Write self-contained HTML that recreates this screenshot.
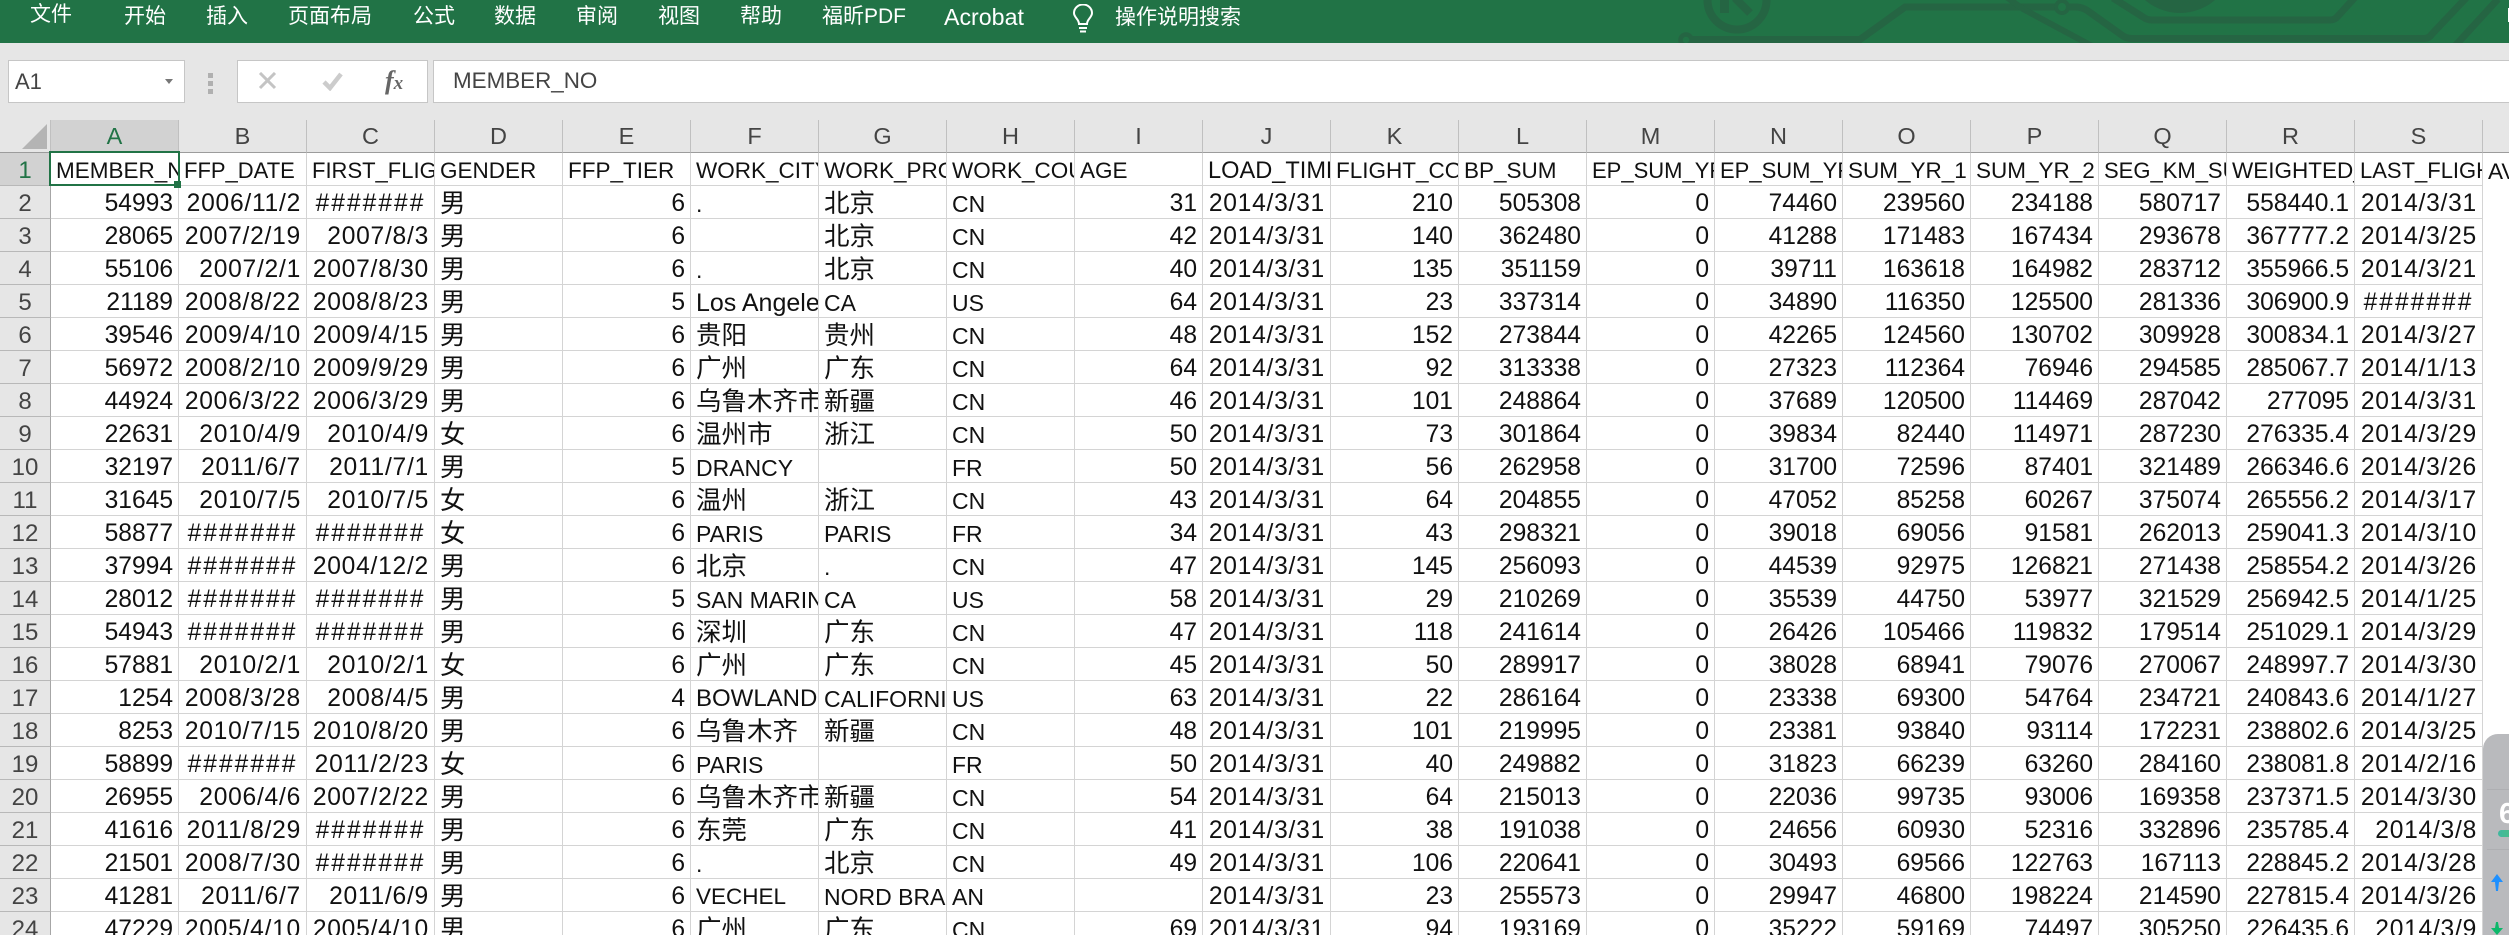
<!DOCTYPE html>
<html lang="zh">
<head>
<meta charset="utf-8">
<title>Excel</title>
<style>
html,body{margin:0;padding:0;width:2509px;height:935px;overflow:hidden;background:#fff}
body{position:relative;font-family:"Liberation Sans","Noto Sans CJK SC",sans-serif;color:#111}
.top{position:absolute;left:0;top:0;width:2509px;height:43px;background:#217346;overflow:hidden}
.top svg{position:absolute;left:0;top:0}
.m{position:absolute;white-space:nowrap;color:#fff;font-size:21px;line-height:30px;font-weight:400;top:2px}
.bar{position:absolute;left:0;top:43px;width:2509px;height:77px;background:#e6e6e6}
.box{position:absolute;background:#fff;border:1px solid #c6c6c6;box-sizing:border-box}
.dot{position:absolute;left:208px;width:5px;height:5px;background:#b0b0b0}
table{position:absolute;left:0;top:120px;border-collapse:separate;border-spacing:0;table-layout:fixed;width:2611px}
col.rh{width:51px}
col.c{width:128px}
tr{height:33px}
td,th{box-sizing:border-box;height:33px;padding:4px 0 0;line-height:28px;overflow:hidden;white-space:nowrap;font-weight:400;border-right:1px solid #d4d4d4;border-bottom:1px solid #d4d4d4;font-size:24.6px;color:#111}
th{background:#e6e6e6;color:#444;text-align:center;font-size:24px;border-right:1px solid #a6a6a6;border-bottom:1px solid #b8b8b8;padding-top:4px}
thead th{font-size:23.5px;border-right:1px solid #c0c0c0;border-bottom:1px solid #9c9c9c;padding-top:1px;line-height:31px}
thead th:first-child{background:#e6e6e6}
thead th.s,th.s{background:#d2d2d2;color:#217346}
td{text-align:left;padding-left:5px}
td:nth-child(2),td:nth-child(6),td:nth-child(10),td:nth-child(n+12):nth-child(-n+19){text-align:right;padding-left:0;padding-right:5px}
td:nth-child(3),td:nth-child(4),td:nth-child(11),td:nth-child(20){text-align:right;padding-left:0;padding-right:5px;letter-spacing:.75px}
td:nth-child(5),td:nth-child(7),td:nth-child(8){font-size:25.5px;font-weight:400}
td:nth-child(9){font-size:23px}
td:last-child{border:0}
td.l{font-size:23px!important;font-weight:400}
td.h{text-align:center!important;padding:4px 0 0!important;letter-spacing:2px!important}
tr.f td{text-align:left!important;padding:4px 0 0 5px!important;font-size:22.5px!important;font-weight:400;letter-spacing:0!important}
tr.f td.n{font-size:22px!important}
tr.f td.w2{font-size:23.6px!important}
.sel{position:absolute;left:49px;top:151px;width:131px;height:35px;border:2px solid #217346;box-sizing:border-box}
.hd{position:absolute;left:174px;top:181px;width:7px;height:7px;background:#217346;border:0 solid #fff}
.tri{position:absolute;left:22px;top:124px;width:0;height:0;border-style:solid;border-width:0 0 25px 25px;border-color:transparent transparent #b4b4b4 transparent}
.w{position:absolute;left:2483px;top:734px;width:40px;height:201px;background:#b9babd;border-radius:15px 0 0 0;overflow:hidden}
.w i{position:absolute;display:block}
</style>
</head>
<body>
<div class="top">
<svg width="2509" height="43" viewBox="0 0 2509 43" fill="none" stroke="#256543" stroke-width="7">
<circle cx="1737" cy="0" r="29.5" stroke-width="8"/>
<path d="M1724.500 0V13" stroke-width="9"/>
<path d="M1735 -2L1750 13" stroke-width="8"/>
<circle cx="1686" cy="40" r="5.500" stroke-width="4.500"/>
<path d="M1691 39.500H1860L1905 7H2055"/>
<circle cx="2062" cy="7" r="6" stroke-width="4"/>
<path d="M2068 7H2076Q2082 7 2088 11L2123 36Q2127 38.500 2132 38.500H2424Q2429 38.500 2432 34L2467 -3"/>
<path d="M2113 -2L2143 17Q2147 20 2152 20H2330Q2335 20 2338 16L2358 -6"/>
<path d="M2005 -4L2023 9L2092 46" stroke-width="6"/>
<path d="M2498 -1L2455 46"/>
<circle cx="2180" cy="-40.600" r="53.600" fill="#256543" stroke="none"/>
</svg>
<span class="m" style="left:30px;top:0">文件</span>
<span class="m" style="left:124px">开始</span>
<span class="m" style="left:206px">插入</span>
<span class="m" style="left:288px">页面布局</span>
<span class="m" style="left:413px">公式</span>
<span class="m" style="left:494px">数据</span>
<span class="m" style="left:576px">审阅</span>
<span class="m" style="left:658px">视图</span>
<span class="m" style="left:740px">帮助</span>
<span class="m" style="left:822px">福昕PDF</span>
<span class="m" style="left:944px;font-size:23.200px">Acrobat</span>
<svg style="left:1072px;top:4px" width="22" height="29" viewBox="0 0 22 29" fill="none" stroke="#fff" stroke-width="2">
<path d="M7 20C7 15 2 13.500 2 9A9 8.500 0 0 1 20 9C20 13.500 15 15 15 20Z"/>
<path d="M7 24H15M8 27.500H14"/>
</svg>
<span class="m" style="left:1115px;top:3px">操作说明搜索</span>
<i style="position:absolute;left:2508px;top:8px;width:1px;height:14px;background:#fff"></i>
</div>

<div class="bar"></div>
<div class="box" style="left:8px;top:60px;width:177px;height:43px"></div>
<div style="position:absolute;left:15px;top:68px;font-size:22px;line-height:28px;color:#444">A1</div>
<svg style="position:absolute;left:165px;top:79px" width="8" height="5"><path d="M0 0H8L4 5Z" fill="#777"/></svg>
<i class="dot" style="top:73px"></i><i class="dot" style="top:81px"></i><i class="dot" style="top:89px"></i>
<div class="box" style="left:237px;top:60px;width:191px;height:43px"></div>
<div class="box" style="left:433px;top:60px;width:2090px;height:43px"></div>
<svg style="position:absolute;left:258px;top:72px" width="20" height="18" fill="none" stroke="#c4c4c4" stroke-width="3"><path d="M2 1L17 16M17 1L2 16"/></svg>
<svg style="position:absolute;left:322px;top:72px" width="22" height="19" fill="none" stroke="#cccccc" stroke-width="4.500"><path d="M2 10L8 16L19 2"/></svg>
<div style="position:absolute;left:385px;top:66px;font-family:'Liberation Serif',serif;font-style:italic;font-weight:700;font-size:26px;line-height:30px;color:#666">f<span style="font-size:19px">x</span></div>
<div style="position:absolute;left:453px;top:67px;font-size:22.400px;line-height:28px;color:#444">MEMBER_NO</div>

<table>
<colgroup><col class="rh"><col class="c"><col class="c"><col class="c"><col class="c"><col class="c"><col class="c"><col class="c"><col class="c"><col class="c"><col class="c"><col class="c"><col class="c"><col class="c"><col class="c"><col class="c"><col class="c"><col class="c"><col class="c"><col class="c"><col class="c"></colgroup>
<thead><tr><th></th><th class="s">A</th><th>B</th><th>C</th><th>D</th><th>E</th><th>F</th><th>G</th><th>H</th><th>I</th><th>J</th><th>K</th><th>L</th><th>M</th><th>N</th><th>O</th><th>P</th><th>Q</th><th>R</th><th>S</th><th>T</th></tr></thead>
<tbody>
<tr class="f"><th class="s">1</th><td>MEMBER_NO</td><td class="n">FFP_DATE</td><td class="n">FIRST_FLIGHT_DATE</td><td>GENDER</td><td>FFP_TIER</td><td>WORK_CITY</td><td>WORK_PROVINCE</td><td>WORK_COUNTRY</td><td>AGE</td><td class="w2">LOAD_TIME</td><td>FLIGHT_COUNT</td><td>BP_SUM</td><td class="n">EP_SUM_YR_1</td><td class="n">EP_SUM_YR_2</td><td>SUM_YR_1</td><td>SUM_YR_2</td><td class="n">SEG_KM_SUM</td><td>WEIGHTED_SEG</td><td class="n">LAST_FLIGHT_DATE</td><td>AVG_INTERVAL</td></tr>
<tr><th>2</th><td>54993</td><td>2006/11/2</td><td class="h">#######</td><td>男</td><td>6</td><td class="l">.</td><td>北京</td><td>CN</td><td>31</td><td>2014/3/31</td><td>210</td><td>505308</td><td>0</td><td>74460</td><td>239560</td><td>234188</td><td>580717</td><td>558440.1</td><td>2014/3/31</td><td></td></tr>
<tr><th>3</th><td>28065</td><td>2007/2/19</td><td>2007/8/3</td><td>男</td><td>6</td><td class="l"></td><td>北京</td><td>CN</td><td>42</td><td>2014/3/31</td><td>140</td><td>362480</td><td>0</td><td>41288</td><td>171483</td><td>167434</td><td>293678</td><td>367777.2</td><td>2014/3/25</td><td></td></tr>
<tr><th>4</th><td>55106</td><td>2007/2/1</td><td>2007/8/30</td><td>男</td><td>6</td><td class="l">.</td><td>北京</td><td>CN</td><td>40</td><td>2014/3/31</td><td>135</td><td>351159</td><td>0</td><td>39711</td><td>163618</td><td>164982</td><td>283712</td><td>355966.5</td><td>2014/3/21</td><td></td></tr>
<tr><th>5</th><td>21189</td><td>2008/8/22</td><td>2008/8/23</td><td>男</td><td>5</td><td class="l" style="font-size:25px!important">Los Angeles</td><td class="l">CA</td><td>US</td><td>64</td><td>2014/3/31</td><td>23</td><td>337314</td><td>0</td><td>34890</td><td>116350</td><td>125500</td><td>281336</td><td>306900.9</td><td class="h">#######</td><td></td></tr>
<tr><th>6</th><td>39546</td><td>2009/4/10</td><td>2009/4/15</td><td>男</td><td>6</td><td>贵阳</td><td>贵州</td><td>CN</td><td>48</td><td>2014/3/31</td><td>152</td><td>273844</td><td>0</td><td>42265</td><td>124560</td><td>130702</td><td>309928</td><td>300834.1</td><td>2014/3/27</td><td></td></tr>
<tr><th>7</th><td>56972</td><td>2008/2/10</td><td>2009/9/29</td><td>男</td><td>6</td><td>广州</td><td>广东</td><td>CN</td><td>64</td><td>2014/3/31</td><td>92</td><td>313338</td><td>0</td><td>27323</td><td>112364</td><td>76946</td><td>294585</td><td>285067.7</td><td>2014/1/13</td><td></td></tr>
<tr><th>8</th><td>44924</td><td>2006/3/22</td><td>2006/3/29</td><td>男</td><td>6</td><td>乌鲁木齐市</td><td>新疆</td><td>CN</td><td>46</td><td>2014/3/31</td><td>101</td><td>248864</td><td>0</td><td>37689</td><td>120500</td><td>114469</td><td>287042</td><td>277095</td><td>2014/3/31</td><td></td></tr>
<tr><th>9</th><td>22631</td><td>2010/4/9</td><td>2010/4/9</td><td>女</td><td>6</td><td>温州市</td><td>浙江</td><td>CN</td><td>50</td><td>2014/3/31</td><td>73</td><td>301864</td><td>0</td><td>39834</td><td>82440</td><td>114971</td><td>287230</td><td>276335.4</td><td>2014/3/29</td><td></td></tr>
<tr><th>10</th><td>32197</td><td>2011/6/7</td><td>2011/7/1</td><td>男</td><td>5</td><td class="l">DRANCY</td><td></td><td>FR</td><td>50</td><td>2014/3/31</td><td>56</td><td>262958</td><td>0</td><td>31700</td><td>72596</td><td>87401</td><td>321489</td><td>266346.6</td><td>2014/3/26</td><td></td></tr>
<tr><th>11</th><td>31645</td><td>2010/7/5</td><td>2010/7/5</td><td>女</td><td>6</td><td>温州</td><td>浙江</td><td>CN</td><td>43</td><td>2014/3/31</td><td>64</td><td>204855</td><td>0</td><td>47052</td><td>85258</td><td>60267</td><td>375074</td><td>265556.2</td><td>2014/3/17</td><td></td></tr>
<tr><th>12</th><td>58877</td><td class="h">#######</td><td class="h">#######</td><td>女</td><td>6</td><td class="l">PARIS</td><td class="l">PARIS</td><td>FR</td><td>34</td><td>2014/3/31</td><td>43</td><td>298321</td><td>0</td><td>39018</td><td>69056</td><td>91581</td><td>262013</td><td>259041.3</td><td>2014/3/10</td><td></td></tr>
<tr><th>13</th><td>37994</td><td class="h">#######</td><td>2004/12/2</td><td>男</td><td>6</td><td>北京</td><td class="l">.</td><td>CN</td><td>47</td><td>2014/3/31</td><td>145</td><td>256093</td><td>0</td><td>44539</td><td>92975</td><td>126821</td><td>271438</td><td>258554.2</td><td>2014/3/26</td><td></td></tr>
<tr><th>14</th><td>28012</td><td class="h">#######</td><td class="h">#######</td><td>男</td><td>5</td><td class="l">SAN MARINO</td><td class="l">CA</td><td>US</td><td>58</td><td>2014/3/31</td><td>29</td><td>210269</td><td>0</td><td>35539</td><td>44750</td><td>53977</td><td>321529</td><td>256942.5</td><td>2014/1/25</td><td></td></tr>
<tr><th>15</th><td>54943</td><td class="h">#######</td><td class="h">#######</td><td>男</td><td>6</td><td>深圳</td><td>广东</td><td>CN</td><td>47</td><td>2014/3/31</td><td>118</td><td>241614</td><td>0</td><td>26426</td><td>105466</td><td>119832</td><td>179514</td><td>251029.1</td><td>2014/3/29</td><td></td></tr>
<tr><th>16</th><td>57881</td><td>2010/2/1</td><td>2010/2/1</td><td>女</td><td>6</td><td>广州</td><td>广东</td><td>CN</td><td>45</td><td>2014/3/31</td><td>50</td><td>289917</td><td>0</td><td>38028</td><td>68941</td><td>79076</td><td>270067</td><td>248997.7</td><td>2014/3/30</td><td></td></tr>
<tr><th>17</th><td>1254</td><td>2008/3/28</td><td>2008/4/5</td><td>男</td><td>4</td><td class="l" style="font-size:24px!important">BOWLAND</td><td class="l">CALIFORNIA</td><td>US</td><td>63</td><td>2014/3/31</td><td>22</td><td>286164</td><td>0</td><td>23338</td><td>69300</td><td>54764</td><td>234721</td><td>240843.6</td><td>2014/1/27</td><td></td></tr>
<tr><th>18</th><td>8253</td><td>2010/7/15</td><td>2010/8/20</td><td>男</td><td>6</td><td>乌鲁木齐</td><td>新疆</td><td>CN</td><td>48</td><td>2014/3/31</td><td>101</td><td>219995</td><td>0</td><td>23381</td><td>93840</td><td>93114</td><td>172231</td><td>238802.6</td><td>2014/3/25</td><td></td></tr>
<tr><th>19</th><td>58899</td><td class="h">#######</td><td>2011/2/23</td><td>女</td><td>6</td><td class="l">PARIS</td><td></td><td>FR</td><td>50</td><td>2014/3/31</td><td>40</td><td>249882</td><td>0</td><td>31823</td><td>66239</td><td>63260</td><td>284160</td><td>238081.8</td><td>2014/2/16</td><td></td></tr>
<tr><th>20</th><td>26955</td><td>2006/4/6</td><td>2007/2/22</td><td>男</td><td>6</td><td>乌鲁木齐市</td><td>新疆</td><td>CN</td><td>54</td><td>2014/3/31</td><td>64</td><td>215013</td><td>0</td><td>22036</td><td>99735</td><td>93006</td><td>169358</td><td>237371.5</td><td>2014/3/30</td><td></td></tr>
<tr><th>21</th><td>41616</td><td>2011/8/29</td><td class="h">#######</td><td>男</td><td>6</td><td>东莞</td><td>广东</td><td>CN</td><td>41</td><td>2014/3/31</td><td>38</td><td>191038</td><td>0</td><td>24656</td><td>60930</td><td>52316</td><td>332896</td><td>235785.4</td><td>2014/3/8</td><td></td></tr>
<tr><th>22</th><td>21501</td><td>2008/7/30</td><td class="h">#######</td><td>男</td><td>6</td><td class="l">.</td><td>北京</td><td>CN</td><td>49</td><td>2014/3/31</td><td>106</td><td>220641</td><td>0</td><td>30493</td><td>69566</td><td>122763</td><td>167113</td><td>228845.2</td><td>2014/3/28</td><td></td></tr>
<tr><th>23</th><td>41281</td><td>2011/6/7</td><td>2011/6/9</td><td>男</td><td>6</td><td class="l" style="font-size:22.500px!important">VECHEL</td><td class="l">NORD BRABANT</td><td>AN</td><td></td><td>2014/3/31</td><td>23</td><td>255573</td><td>0</td><td>29947</td><td>46800</td><td>198224</td><td>214590</td><td>227815.4</td><td>2014/3/26</td><td></td></tr>
<tr><th>24</th><td>47229</td><td>2005/4/10</td><td>2005/4/10</td><td>男</td><td>6</td><td>广州</td><td>广东</td><td>CN</td><td>69</td><td>2014/3/31</td><td>94</td><td>193169</td><td>0</td><td>35222</td><td>59169</td><td>74497</td><td>305250</td><td>226435.6</td><td>2014/3/9</td><td></td></tr>
</tbody>
</table>

<div class="tri"></div>
<div class="sel"></div>
<div class="hd"></div>

<div class="w">
<i style="left:4px;top:55px;width:40px;height:1px;background:#aeafb2"></i>
<i style="left:4px;top:115px;width:40px;height:1px;background:#aeafb2"></i>
<span style="position:absolute;left:16px;top:64px;font-size:29px;line-height:32px;color:#fff;font-weight:700">6</span>
<i style="left:15px;top:96px;width:30px;height:7px;border-radius:4px;background:linear-gradient(90deg,#3fb8a0,#5cc46a)"></i>
<svg style="position:absolute;left:8px;top:140px" width="12" height="17" viewBox="0 0 12 17"><path d="M6 0L12 8H8L7 17H5L4 8H0Z" fill="#1e90ff"/></svg>
<svg style="position:absolute;left:8px;top:188px" width="12" height="13" viewBox="0 0 12 13"><path d="M5 0H7L8 6H12L6 13L0 6H4Z" fill="#0cb86a"/></svg>
</div>
</body>
</html>
